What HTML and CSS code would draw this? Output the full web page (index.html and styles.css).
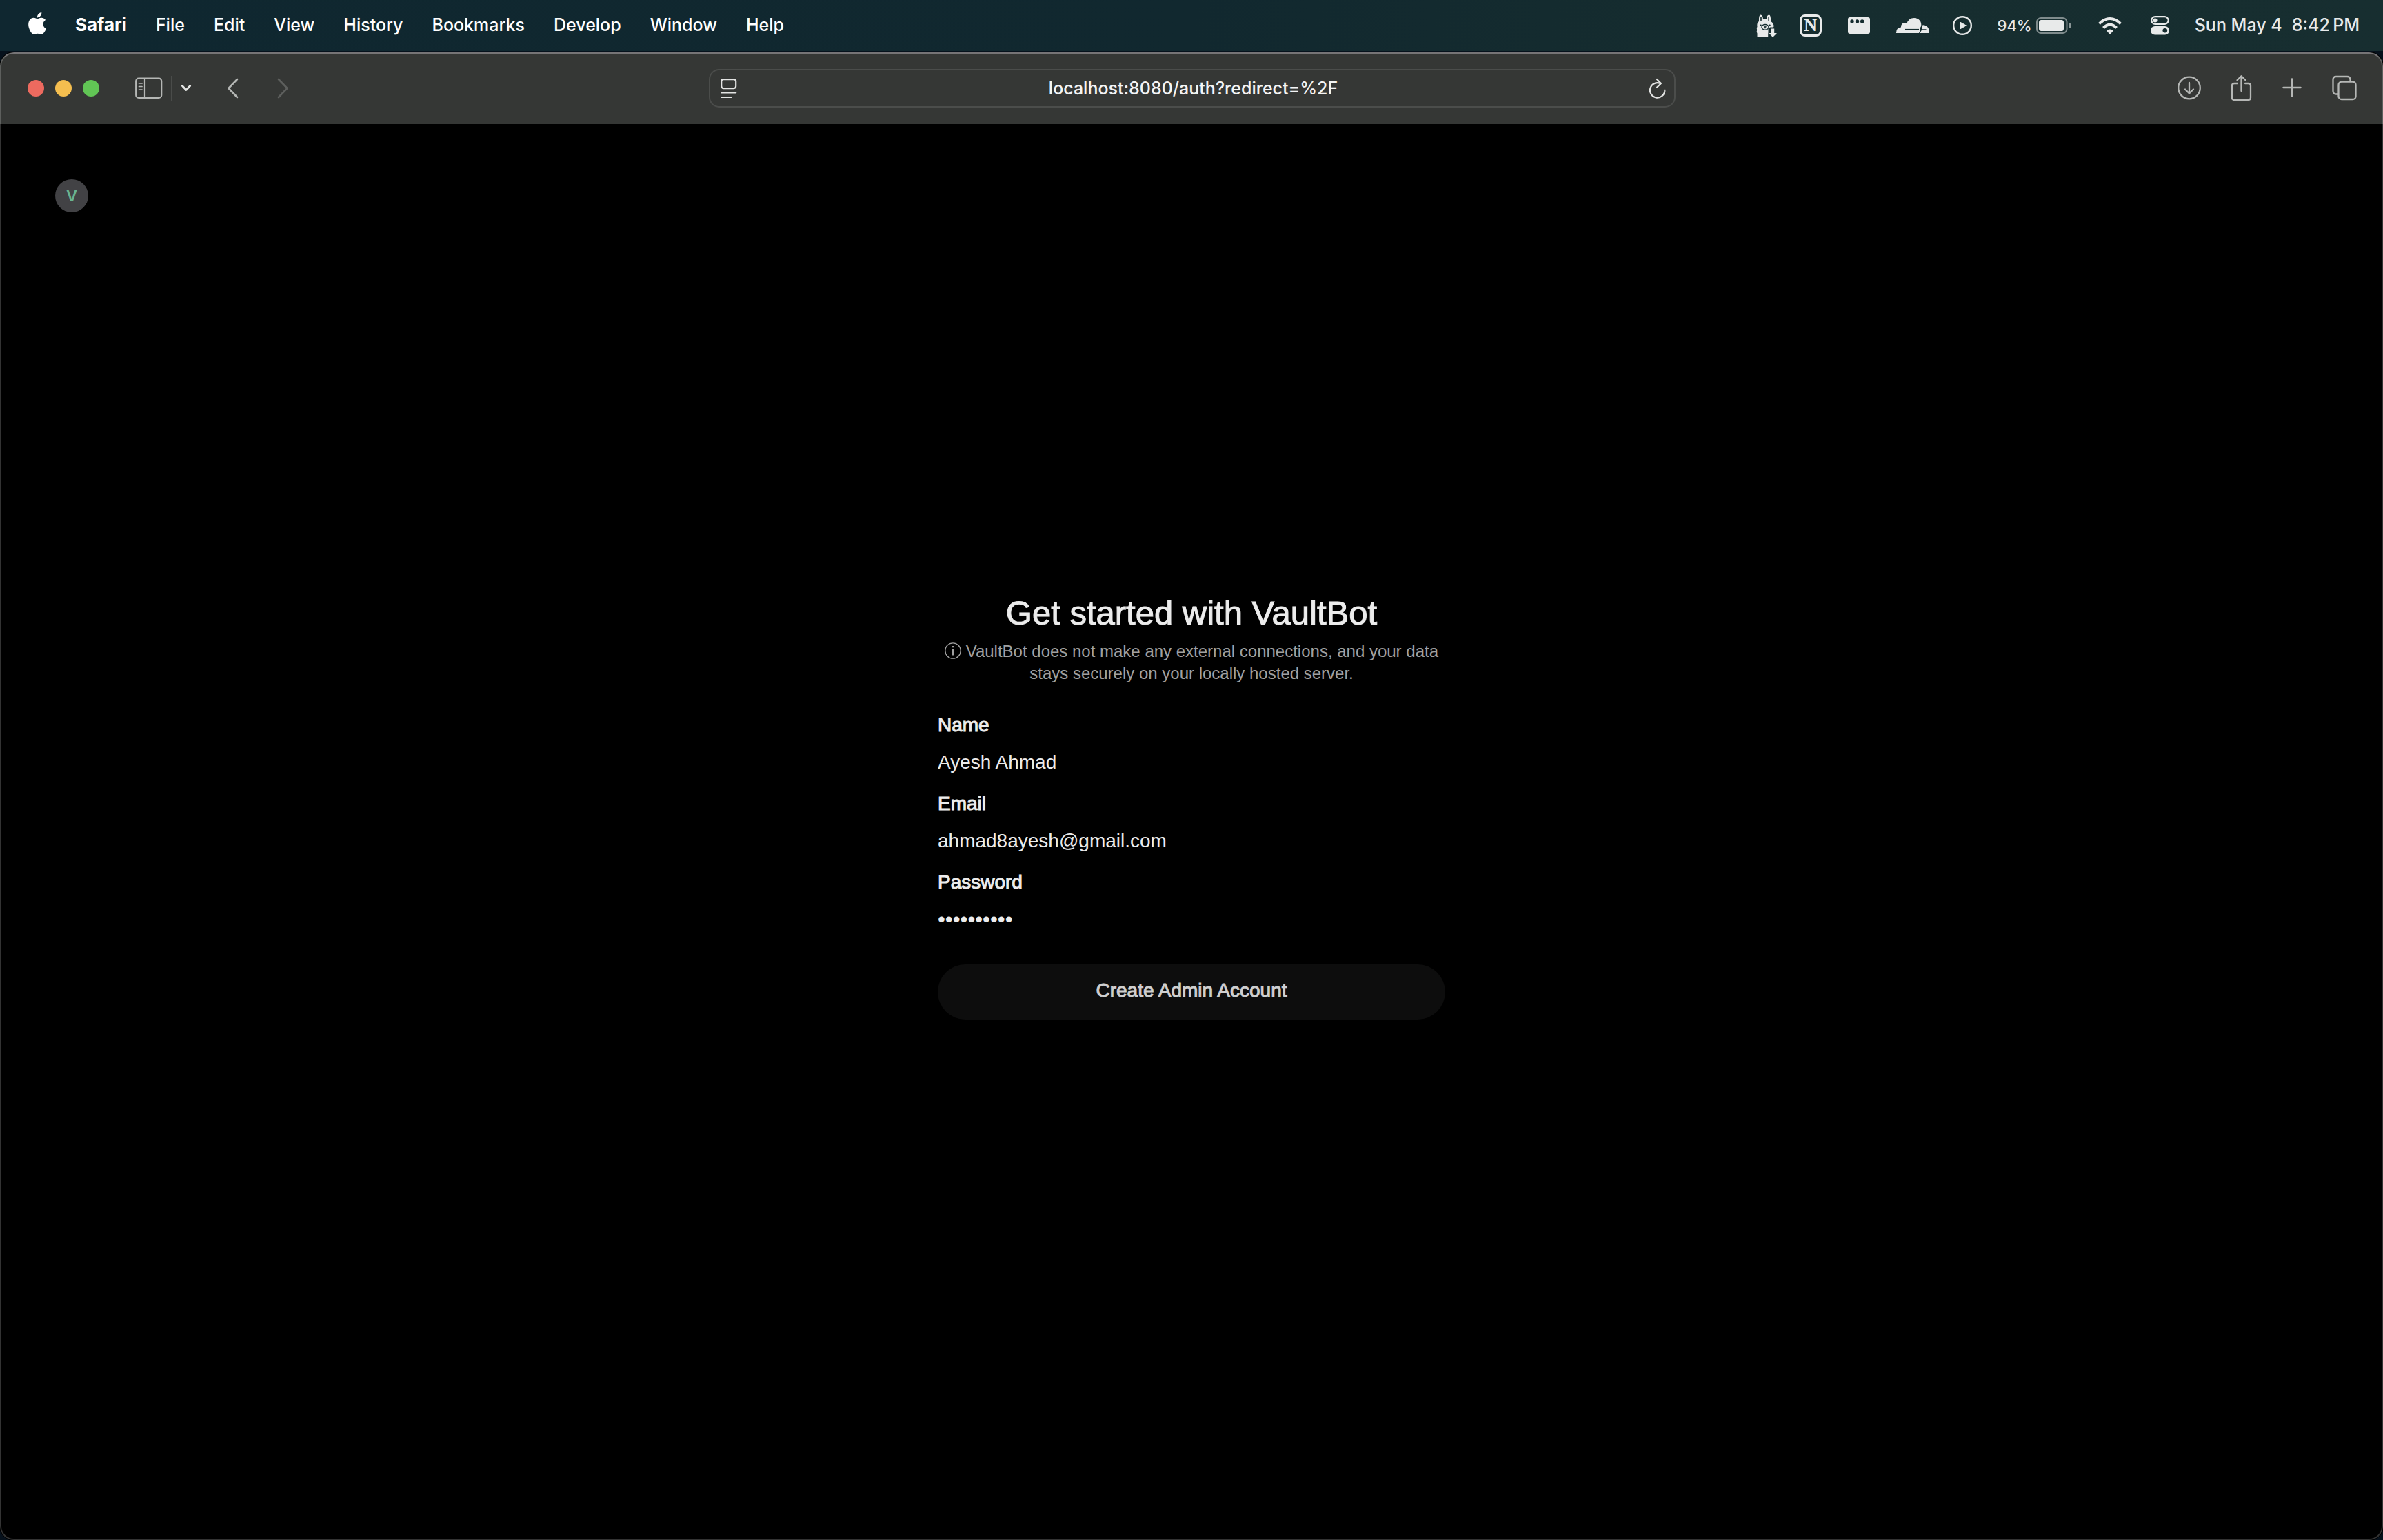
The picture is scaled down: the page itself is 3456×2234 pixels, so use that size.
FILE: index.html
```html
<!DOCTYPE html>
<html lang="en">
<head>
  <meta charset="utf-8">
  <title>VaultBot</title>
  <link rel="stylesheet" href="styles.css">
</head>
<body>
  <header class="menubar">
    <nav class="menus" aria-label="Menu bar">
      <button class="menu apple" aria-label="Apple menu">
        <svg width="26" height="32" viewBox="2.1 0 19.8 24" preserveAspectRatio="none"><path fill="currentColor" d="M12.152 6.896c-.948 0-2.415-1.078-3.96-1.04-2.04.027-3.91 1.183-4.961 3.014-2.117 3.675-.546 9.103 1.519 12.09 1.013 1.454 2.208 3.09 3.792 3.039 1.52-.065 2.09-.987 3.935-.987 1.831 0 2.35.987 3.96.948 1.637-.026 2.676-1.48 3.676-2.948 1.156-1.688 1.636-3.325 1.662-3.415-.039-.013-3.182-1.221-3.22-4.857-.026-3.04 2.48-4.494 2.597-4.559-1.429-2.09-3.623-2.324-4.39-2.376-2-.156-3.675 1.09-4.61 1.09zM15.53 3.83c.843-1.012 1.4-2.427 1.245-3.83-1.207.052-2.662.805-3.532 1.818-.78.896-1.454 2.338-1.273 3.714 1.338.104 2.715-.688 3.559-1.701"/></svg>
      </button>
      <button class="menu menu-app">Safari</button>
      <button class="menu">File</button>
      <button class="menu">Edit</button>
      <button class="menu">View</button>
      <button class="menu">History</button>
      <button class="menu">Bookmarks</button>
      <button class="menu">Develop</button>
      <button class="menu">Window</button>
      <button class="menu">Help</button>
    </nav>
    <div class="status">
      <svg width="30" height="34" viewBox="0 0 30 34" aria-label="Ollama">
        <path fill="currentColor" d="M2.500 34V28.500Q1 26 2.200 23.500Q1.200 21 2.500 18.500Q1.500 13 5 11Q4.500 1.500 7.500 1.500Q10.500 1.500 11 7.500Q13.500 6.500 16 7.500Q16.500 1.500 19.500 1.500Q22.500 1.500 22 11Q25.500 12.500 26.500 17Q26.600 18.500 26 19.500H21L18.500 22V27Q18 30 18.200 34Z"/>
        <path stroke="#152c2f" stroke-width="1.600" fill="none" stroke-linecap="round" d="M8 9.500V5M19.200 9.500V5"/>
        <ellipse cx="14" cy="19.300" rx="5" ry="3.800" fill="none" stroke="#152c2f" stroke-width="1.400"/>
        <path fill="none" stroke="#152c2f" stroke-width="1.400" d="M12.500 18.300L14 19.300L15.500 18.300M14 19.300V21.200"/>
        <circle cx="7.500" cy="16.800" r="1.300" fill="#152c2f"/><circle cx="20.500" cy="16.800" r="1.300" fill="#152c2f"/>
        <path fill="currentColor" d="M22.800 21.500H27.200V28H31L25 34L19.500 28H22.800Z"/>
      </svg>
      <span class="notion"><span class="notion-mark">N</span></span>
      <svg width="36" height="24" viewBox="0 0 36 24" aria-label="Windows">
        <rect width="32" height="24" rx="3" fill="currentColor"/>
        <g fill="#152c2f"><circle cx="6" cy="6" r="2.700"/><circle cx="13.500" cy="6" r="2.700"/><circle cx="20.700" cy="6" r="2.700"/></g>
      </svg>
      <svg width="48" height="22" viewBox="0 0 48 22" aria-label="Cloudflare">
        <path fill="currentColor" d="M0 22Q-.2 14 7 13.500Q7 7 12.500 7Q14.500 7 15.500 8Q18 0 26 0C33 0 37 5.500 36.300 11Q36 13.500 34 15.200L35.200 17L33 22Z"/>
        <path fill="currentColor" d="M38.500 10.200Q48 10.500 48 22H34.500L36.500 18.200Q38 17.400 43.500 17.200V16.200H37.500Q36.800 15.500 37.600 13.500Z"/>
        <path fill="none" stroke="#152c2f" stroke-width="1.200" d="M13 16.500H33"/>
      </svg>
      <svg width="31" height="30" viewBox="0 0 31 30" aria-label="Now playing">
        <circle cx="14" cy="15" r="12.800" fill="none" stroke="currentColor" stroke-width="2.400"/>
        <path fill="currentColor" stroke="currentColor" stroke-width="1" stroke-linejoin="round" d="M10.500 10V20L19.500 15Z"/>
      </svg>
      <span class="battery">
        <span class="battery-level">94%</span>
        <svg width="56" height="24" viewBox="0 0 56 24" aria-hidden="true">
          <rect x="1" y="1" width="43.500" height="22" rx="6" fill="none" stroke="#fff" stroke-opacity=".45" stroke-width="2"/>
          <rect x="4" y="4" width="36" height="16" rx="3.500" fill="currentColor"/>
          <path fill="#fff" fill-opacity=".5" d="M48 8Q51 9 51 12T48 16Z"/>
        </svg>
      </span>
      <svg width="38" height="26" viewBox="0 0 38 26" aria-label="Wi-Fi">
        <g fill="none" stroke="currentColor" stroke-width="4"><path d="M1.500 10.500Q8.500 3 17 3T32.500 10.500"/><path d="M7.500 16.500Q12 11.800 17 11.800T26.500 16.500"/></g>
        <path fill="currentColor" d="M12 20.500Q17 16.500 22 20.500L17 26Z"/>
      </svg>
      <svg width="34" height="28" viewBox="0 0 34 28" aria-label="Control Center">
        <rect x="5.200" y="1.200" width="24.500" height="10.600" rx="5.300" fill="none" stroke="currentColor" stroke-width="2.200"/>
        <circle cx="10.500" cy="6.500" r="3" fill="currentColor"/>
        <rect x="4" y="15" width="27" height="12.500" rx="6.200" fill="currentColor"/>
        <circle cx="24.800" cy="21.200" r="3.300" fill="#152c2f"/>
      </svg>
      <time class="clock"><span>Sun May 4</span><span>8:42&#8201;PM</span></time>
    </div>
  </header>

  <div class="window">
    <div class="toolbar">
      <div class="toolbar-start">
        <div class="lights">
          <button class="light light-close" aria-label="Close"></button>
          <button class="light light-minimize" aria-label="Minimize"></button>
          <button class="light light-zoom" aria-label="Zoom"></button>
        </div>
        <div class="sidebar-tools">
          <button class="tool" aria-label="Show sidebar">
            <svg width="40" height="32" viewBox="0 0 40 32" fill="none" stroke="currentColor" stroke-width="2.200"><rect x="1.200" y="1.600" width="37" height="28.400" rx="4"/><path d="M14 2V30"/><path stroke-width="1.700" stroke-linecap="round" d="M5.500 9H10M5.500 13.500H10M5.500 18H10"/></svg>
          </button>
          <span class="divider"></span>
          <button class="tool tool-bright" aria-label="Tab groups">
            <svg width="16" height="12" viewBox="0 0 16 12" fill="none" stroke="currentColor" stroke-width="2.800" stroke-linecap="round" stroke-linejoin="round"><path d="M2.300 2.500L8 8.500L13.700 2.500"/></svg>
          </button>
        </div>
        <div class="history-tools">
          <button class="tool" aria-label="Back">
            <svg width="16" height="30" viewBox="0 0 16 30" fill="none" stroke="currentColor" stroke-width="2.600" stroke-linecap="round" stroke-linejoin="round"><path d="M14 2L1.500 15L14 28"/></svg>
          </button>
          <button class="tool tool-dim" aria-label="Forward">
            <svg width="16" height="30" viewBox="0 0 16 30" fill="none" stroke="currentColor" stroke-width="2.600" stroke-linecap="round" stroke-linejoin="round"><path d="M2 2L14.500 15L2 28"/></svg>
          </button>
        </div>
      </div>

      <div class="address">
        <button class="tool tool-bright" aria-label="Page menu">
          <svg width="24" height="30" viewBox="0 0 24 30" fill="none" stroke="currentColor" stroke-width="2.200" stroke-linecap="round"><rect x="1.200" y="2.100" width="21" height="13" rx="3"/><path d="M1.200 21.500H22.200M1.200 28H15.500"/></svg>
        </button>
        <input class="address-field" type="text" aria-label="Address" value="localhost:8080/auth?redirect=%2F">
        <button class="tool tool-bright" aria-label="Reload">
          <svg width="24" height="30" viewBox="0 0 24 30" fill="none" stroke="currentColor" stroke-width="2.200" stroke-linecap="round" stroke-linejoin="round"><path d="M22.400 17.500A10.700 10.700 0 1 1 16 8.100"/><path d="M11 2L17 8L11 13.700"/></svg>
        </button>
      </div>

      <div class="toolbar-end">
        <button class="tool" aria-label="Downloads">
          <svg width="36" height="38" viewBox="0 0 36 38" fill="none" stroke="currentColor" stroke-width="2.300" stroke-linecap="round" stroke-linejoin="round"><circle cx="18" cy="18.500" r="15.800"/><path d="M18 11V26M12 20.500L18 26.500L24 20.500"/></svg>
        </button>
        <button class="tool" aria-label="Share">
          <svg width="36" height="38" viewBox="0 0 36 38" fill="none" stroke="currentColor" stroke-width="2.300" stroke-linecap="round" stroke-linejoin="round"><path d="M13 12H8.500Q5 12 5 15.500V32.500Q5 36 8.500 36H28.500Q32 36 32 32.500V15.500Q32 12 28.500 12H24"/><path d="M18.500 23V1.500M12.500 7.300L18.500 1.300L24.500 7.300"/></svg>
        </button>
        <button class="tool" aria-label="New tab">
          <svg width="36" height="38" viewBox="0 0 36 38" fill="none" stroke="currentColor" stroke-width="2.500" stroke-linecap="round"><path d="M17 5.500V30.500M4.500 18H29.500"/></svg>
        </button>
        <button class="tool" aria-label="Tab overview">
          <svg width="36" height="38" viewBox="0 0 36 38" fill="none" stroke="currentColor" stroke-width="2.300"><rect x="9.500" y="9.500" width="25" height="25.500" rx="4.500"/><path d="M9 27.500H6Q1.500 27.500 1.500 23V6.500Q1.500 2 6 2H22Q26.500 2 26.500 6.500V9"/></svg>
        </button>
      </div>
    </div>

    <main class="page">
      <div class="logo">V</div>
      <form class="signup">
        <h1 class="title">Get started with VaultBot</h1>
        <p class="note"><svg class="info" width="24" height="24" viewBox="0 0 24 24" fill="none" stroke="currentColor" stroke-width="1.300"><circle cx="12" cy="12" r="11.200"/><path stroke-width="2" d="M12 9V18.500M12 5V7.200"/></svg> VaultBot does not make any external connections, and your data stays securely on your locally hosted server.</p>
        <div class="fields">
          <div class="field">
            <label class="label" for="name">Name</label>
            <input class="input" id="name" type="text" value="Ayesh Ahmad">
          </div>
          <div class="field">
            <label class="label" for="email">Email</label>
            <input class="input" id="email" type="email" value="ahmad8ayesh@gmail.com">
          </div>
          <div class="field">
            <label class="label" for="password">Password</label>
            <input class="input input-password" id="password" type="password" value="vaultbot10">
          </div>
        </div>
        <button class="submit" type="submit">Create Admin Account</button>
      </form>
    </main>
  </div>
</body>
</html>
```
FILE: styles.css
```css
* {
  box-sizing: border-box;
}

body {
  margin: 0;
  min-height: 100vh;
  display: flex;
  flex-direction: column;
  background: #06111c;
  color: #ececec;
  font-family: Inter, "Liberation Sans", sans-serif;
  font-size: 26px;
}

button,
input {
  margin: 0;
  padding: 0;
  border: 0;
  background: none;
  color: inherit;
  font: inherit;
  outline: none;
}

svg {
  display: block;
  flex: none;
  overflow: visible;
}

/* System menu bar */

.menubar {
  display: flex;
  justify-content: space-between;
  align-items: center;
  height: 74px;
  padding: 0 34px 2px 41px;
  background: linear-gradient(90deg, #0f2730, #11282f 50%, #162d2f 75%, #172e30);
  color: #fff;
  line-height: 32px;
}

.menus {
  display: flex;
  align-items: center;
  gap: 42px;
}

.menu {
  font-size: 25px;
  font-weight: 500;
}

.menu-app {
  font-size: 26px;
  font-weight: 700;
}

.apple {
  padding-bottom: 4px;
}

.menu,
.clock {
  white-space: nowrap;
}

.status {
  display: flex;
  align-items: center;
  gap: 34px;
  color: #e8eaea;
  padding-top: 2px;
}

.notion {
  width: 36px;
}

.notion-mark {
  display: flex;
  align-items: center;
  justify-content: center;
  width: 32px;
  height: 32px;
  border: 3px solid currentColor;
  border-radius: 8px;
  font: 700 26px/26px "Liberation Serif", serif;
}

.battery {
  display: flex;
  align-items: center;
  gap: 6px;
  font-size: 22px;
  font-weight: 500;
}

.clock {
  display: flex;
  gap: 14px;
  padding-bottom: 2px;
  font-size: 25px;
  font-weight: 500;
}

/* Browser window */

.window {
  position: relative;
  flex: 1;
  display: flex;
  flex-direction: column;
  margin-top: 2px;
  border-radius: 20px;
  background: #000;
  box-shadow: 0 0 0 1px #000;
  overflow: hidden;
}

.window::after {
  content: "";
  position: absolute;
  inset: 0;
  border: 2px solid rgba(255, 255, 255, 0.2);
  border-top-color: rgba(255, 245, 255, 0.32);
  border-radius: 20px;
  pointer-events: none;
}

.toolbar {
  display: grid;
  grid-template-columns: 1fr minmax(0, 1402px) 1fr;
  align-items: center;
  height: 104px;
  padding: 0 38px 0 40px;
  background: #353735;
  color: #b5b7b5;
}

.toolbar-start,
.sidebar-tools,
.history-tools,
.lights,
.toolbar-end {
  display: flex;
  align-items: center;
}

.toolbar-start {
  gap: 52px;
}

.lights {
  gap: 16px;
}

.sidebar-tools {
  gap: 12px;
}

.history-tools {
  gap: 56px;
}

.toolbar-end {
  justify-content: flex-end;
  gap: 39px;
}

.light {
  width: 24px;
  height: 24px;
  border-radius: 50%;
}

.light-close {
  background: #ed6a5f;
}

.light-minimize {
  background: #f5be4f;
}

.light-zoom {
  background: #61c555;
}

.divider {
  width: 2px;
  height: 36px;
  background: #4a4c4a;
}

.tool-bright {
  color: #e3e4e3;
}

.tool-dim {
  color: #5d5f5d;
}

.address {
  display: flex;
  align-items: center;
  height: 56px;
  padding: 0 12px 0 15px;
  border: 2px solid #4b4d4b;
  border-radius: 15px;
}

.address-field {
  flex: 1;
  min-width: 0;
  color: #f4f4f4;
  font-size: 25px;
  font-weight: 500;
  text-align: center;
}

/* Sign-up page */

.page {
  flex: 1;
  display: grid;
  padding: 80px;
  font-family: "Liberation Sans", Arial, sans-serif;
}

.logo {
  grid-area: 1 / 1;
  display: flex;
  align-items: center;
  justify-content: center;
  width: 48px;
  height: 48px;
  border-radius: 50%;
  background: #424245;
  color: #68b391;
  font: 600 22px/24px Inter, sans-serif;
}

.signup {
  grid-area: 1 / 1;
  place-self: center;
  display: flex;
  flex-direction: column;
  width: 100%;
  max-width: 736px;
  padding-bottom: 78px;
}

.title {
  margin: 0 0 8px;
  font-size: 49px;
  font-weight: 400;
  line-height: 64px;
  text-align: center;
  -webkit-text-stroke: 1px currentColor;
}

.note {
  margin: 0 0 39px;
  color: #a0a0a0;
  font-size: 24px;
  line-height: 32px;
  text-align: center;
}

.info {
  display: inline-block;
  vertical-align: -3px;
}

.fields {
  display: grid;
  gap: 20px;
}

.field {
  display: grid;
  gap: 14px;
}

.label,
.input,
.submit {
  font-size: 28px;
  line-height: 40px;
}

.label,
.submit {
  -webkit-text-stroke: 1px currentColor;
}

.input {
  width: 100%;
  height: 40px;
}

.input-password {
  font-size: 31px;
}

.submit {
  height: 80px;
  margin-top: 45px;
  padding-bottom: 4px;
  border-radius: 40px;
  background: #0d0d0d;
  color: #cfcfcf;
}
```
